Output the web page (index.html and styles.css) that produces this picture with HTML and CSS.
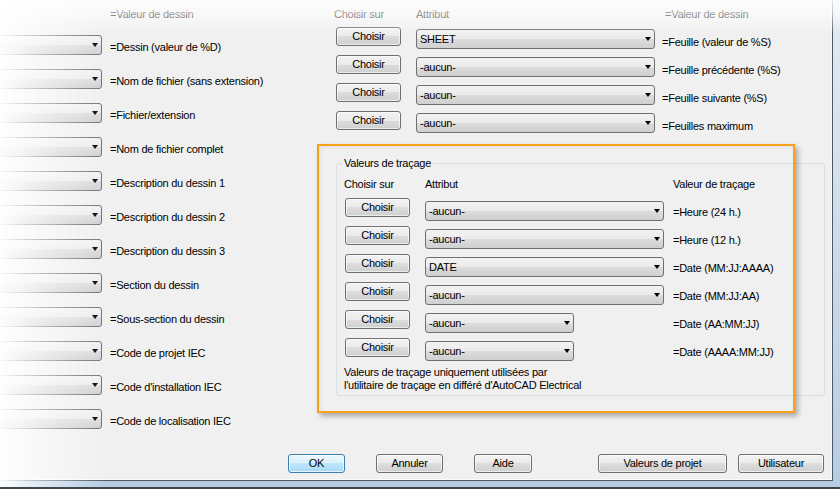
FILE: index.html
```html
<!DOCTYPE html>
<html lang="fr">
<head>
<meta charset="utf-8">
<title>Valeurs de dessin</title>
<link rel="stylesheet" href="styles.css">
</head>
<body>
<div class="window">
  <div class="dialog">
    <div class="main">
      <div class="left">
        <div class="hdr left-hdr">=Valeur de dessin</div>
        <div class="lrow"><div class="combo lcombo"><span class="arrow"></span></div><span class="lbl">=Dessin (valeur de %D)</span></div>
        <div class="lrow"><div class="combo lcombo"><span class="arrow"></span></div><span class="lbl">=Nom de fichier (sans extension)</span></div>
        <div class="lrow"><div class="combo lcombo"><span class="arrow"></span></div><span class="lbl">=Fichier/extension</span></div>
        <div class="lrow"><div class="combo lcombo"><span class="arrow"></span></div><span class="lbl">=Nom de fichier complet</span></div>
        <div class="lrow"><div class="combo lcombo"><span class="arrow"></span></div><span class="lbl">=Description du dessin 1</span></div>
        <div class="lrow"><div class="combo lcombo"><span class="arrow"></span></div><span class="lbl">=Description du dessin 2</span></div>
        <div class="lrow"><div class="combo lcombo"><span class="arrow"></span></div><span class="lbl">=Description du dessin 3</span></div>
        <div class="lrow"><div class="combo lcombo"><span class="arrow"></span></div><span class="lbl">=Section du dessin</span></div>
        <div class="lrow"><div class="combo lcombo"><span class="arrow"></span></div><span class="lbl">=Sous-section du dessin</span></div>
        <div class="lrow"><div class="combo lcombo"><span class="arrow"></span></div><span class="lbl">=Code de projet IEC</span></div>
        <div class="lrow"><div class="combo lcombo"><span class="arrow"></span></div><span class="lbl">=Code d'installation IEC</span></div>
        <div class="lrow"><div class="combo lcombo"><span class="arrow"></span></div><span class="lbl">=Code de localisation IEC</span></div>
      </div>
      <div class="right">
        <div class="tgrid">
          <div class="hdr h-pick">Choisir sur</div>
          <div class="hdr">Attribut</div>
          <div class="hdr h-val">=Valeur de dessin</div>

          <div class="btn pick">Choisir</div>
          <div class="combo acombo"><span class="ctext">SHEET</span><span class="arrow"></span></div>
          <span class="lbl">=Feuille (valeur de %S)</span>

          <div class="btn pick">Choisir</div>
          <div class="combo acombo"><span class="ctext">-aucun-</span><span class="arrow"></span></div>
          <span class="lbl">=Feuille précédente (%S)</span>

          <div class="btn pick">Choisir</div>
          <div class="combo acombo"><span class="ctext">-aucun-</span><span class="arrow"></span></div>
          <span class="lbl">=Feuille suivante (%S)</span>

          <div class="btn pick">Choisir</div>
          <div class="combo acombo"><span class="ctext">-aucun-</span><span class="arrow"></span></div>
          <span class="lbl">=Feuilles maximum</span>
        </div>

        <fieldset class="group">
          <legend>Valeurs de traçage</legend>
          <div class="ggrid">
            <div class="hdr h-gpick">Choisir sur</div>
            <div class="hdr">Attribut</div>
            <div class="hdr">Valeur de traçage</div>

            <div class="btn pick">Choisir</div>
            <div class="combo gcombo"><span class="ctext">-aucun-</span><span class="arrow"></span></div>
            <span class="lbl">=Heure (24 h.)</span>

            <div class="btn pick">Choisir</div>
            <div class="combo gcombo"><span class="ctext">-aucun-</span><span class="arrow"></span></div>
            <span class="lbl">=Heure (12 h.)</span>

            <div class="btn pick">Choisir</div>
            <div class="combo gcombo"><span class="ctext">DATE</span><span class="arrow"></span></div>
            <span class="lbl">=Date (MM:JJ:AAAA)</span>

            <div class="btn pick">Choisir</div>
            <div class="combo gcombo"><span class="ctext">-aucun-</span><span class="arrow"></span></div>
            <span class="lbl">=Date (MM:JJ:AA)</span>

            <div class="btn pick">Choisir</div>
            <div class="combo gcombo short"><span class="ctext">-aucun-</span><span class="arrow"></span></div>
            <span class="lbl">=Date (AA:MM:JJ)</span>

            <div class="btn pick">Choisir</div>
            <div class="combo gcombo short"><span class="ctext">-aucun-</span><span class="arrow"></span></div>
            <span class="lbl">=Date (AAAA:MM:JJ)</span>
          </div>
          <p class="note">Valeurs de traçage uniquement utilisées par<br>l'utilitaire de traçage en différé d'AutoCAD Electrical</p>
        </fieldset>
      </div>
    </div>
    <div class="buttons">
      <div class="btn b-ok">OK</div>
      <div class="btn b-cancel">Annuler</div>
      <div class="btn b-help">Aide</div>
      <div class="btn b-proj">Valeurs de projet</div>
      <div class="btn b-user">Utilisateur</div>
    </div>
  </div>
  <div class="fade-left"></div>
  <div class="fade-top"></div>
  <div class="highlight"></div>
</div>
</body>
</html>
```

FILE: styles.css
```css
* { box-sizing: border-box; }
html, body { margin: 0; padding: 0; }
body {
  font-family: "Liberation Sans", Arial, sans-serif;
  font-size: 11px;
  letter-spacing: -0.25px;
  color: #000;
  background: #f0f0f0;
}
.window {
  position: relative;
  width: 840px;
  height: 489px;
  overflow: hidden;
  background: linear-gradient(to bottom, #e3eaf2, #b7cce2);
  border-bottom: 2px solid #3e464f;
}
.dialog {
  width: 833px;
  height: 481px;
  background: #f0f0f0;
  border-right: 1px solid #4e5965;
  border-bottom: 1px solid #4e5965;
  box-shadow: inset -1px -1px 0 #fbfbfb;
  display: flex;
  flex-direction: column;
}
.main { display: flex; }
.left { width: 336px; flex: none; padding-top: 8px; }
.hdr { line-height: 13px; white-space: nowrap; }
.left-hdr { margin-left: 110px; margin-bottom: 14px; height: 13px; }
.lrow { display: flex; align-items: flex-start; height: 34px; }
.combo {
  display: flex;
  align-items: center;
  height: 20px;
  border: 1px solid #707070;
  border-radius: 3px;
  background: linear-gradient(#f2f2f2, #ebebeb 50%, #dddddd 50%, #cfcfcf);
  padding: 0 3px 0 3px;
  line-height: 13px;
  flex: none;
}
.ctext { white-space: nowrap; }
.lcombo { width: 106px; margin-left: -4px; }
.arrow {
  width: 0;
  height: 0;
  border-left: 3.5px solid transparent;
  border-right: 3.5px solid transparent;
  border-top: 4px solid #000;
  margin-left: auto;
  margin-top: -1px;
}
.lbl { line-height: 13px; white-space: nowrap; margin: 6px 0 0 8px; }
.btn {
  height: 19px;
  border: 1px solid #707070;
  border-radius: 3px;
  background: linear-gradient(#f2f2f2, #ebebeb 50%, #dddddd 50%, #cfcfcf);
  box-shadow: inset 0 0 0 1px rgba(255,255,255,0.6);
  display: flex;
  align-items: center;
  justify-content: center;
  line-height: 13px;
  white-space: nowrap;
  flex: none;
}
.right { width: 497px; flex: none; padding-top: 8px; }
.tgrid {
  display: grid;
  grid-template-columns: 80px 246px auto;
  grid-template-rows: 19px repeat(4, 28px);
  align-items: start;
}
.h-pick { margin-left: -2px; }
.h-val { margin-left: 3px; }
.pick { width: 65px; }
.acombo { width: 239px; margin-top: 2px; }
.tgrid .lbl { margin: 9px 0 0 0; }
.group {
  margin: 18px 0 0 0;
  width: 489px;
  min-width: 0;
  padding: 0 8px 3px 8px;
  border: 1px solid #d5dfe5;
  border-radius: 3px;
}
.group legend {
  padding: 0 2px;
  margin-left: -3px;
  line-height: 13px;
}
.ggrid {
  display: grid;
  grid-template-columns: 80px 248px auto;
  grid-template-rows: repeat(7, 28px);
  align-items: start;
}
.ggrid .hdr { padding-top: 8px; }
.h-gpick { margin-left: -1px; }
.gcombo { width: 239px; margin-top: 3px; }
.gcombo.short { width: 149px; }
.ggrid .lbl { margin: 8px 0 0 0; }
.note { margin: 0 0 0 -1px; line-height: 13px; white-space: nowrap; }
.buttons {
  display: flex;
  margin-top: auto;
  margin-bottom: 7px;
  padding-left: 288px;
}
.b-ok {
  width: 57px;
  border-color: #3c7fb1;
  background: linear-gradient(#eaf6fd, #d9f0fc 50%, #bee6fd 50%, #a7d9f5);
  box-shadow: inset 0 0 0 1px rgba(255,255,255,0.7);
}
.b-cancel { width: 67px; margin-left: 31px; }
.b-help { width: 58px; margin-left: 31px; }
.b-proj { width: 129px; margin-left: 66px; }
.b-user { width: 86px; margin-left: 11px; }
.fade-left {
  position: absolute;
  left: 0;
  top: 0;
  bottom: 0;
  width: 105px;
  background: linear-gradient(to right, rgba(255,255,255,0.95), rgba(255,255,255,0.55) 40px, rgba(255,255,255,0));
  pointer-events: none;
}
.fade-top {
  position: absolute;
  left: 0;
  top: 0;
  right: 0;
  height: 34px;
  background: linear-gradient(to bottom, rgba(255,255,255,0.85), rgba(255,255,255,0.6) 14px, rgba(255,255,255,0));
  pointer-events: none;
}
.highlight {
  position: absolute;
  left: 317px;
  top: 144px;
  width: 478px;
  height: 269px;
  border: 2px solid #f8a01c;
  box-shadow: 3px 3px 5px rgba(0,0,0,0.3), inset 2px 2px 4px rgba(0,0,0,0.06);
  pointer-events: none;
}
```
